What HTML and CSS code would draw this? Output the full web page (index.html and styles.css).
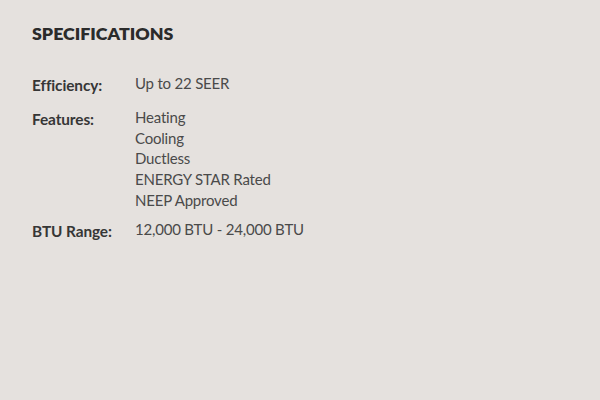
FILE: index.html
```html
<!DOCTYPE html>
<html>
<head>
<meta charset="utf-8">
<link rel="stylesheet" href="styles.css">
</head>
<body>
<div class="specs">
  <h2 class="title">SPECIFICATIONS</h2>
  <dl class="list">
    <div class="row">
      <dt class="label">Efficiency:</dt>
      <dd class="value">Up to 22 SEER</dd>
    </div>
    <div class="row">
      <dt class="label">Features:</dt>
      <dd class="value">Heating<br>Cooling<br>Ductless<br>ENERGY STAR Rated<br>NEEP Approved</dd>
    </div>
    <div class="row">
      <dt class="label">BTU Range:</dt>
      <dd class="value">12,000 BTU - 24,000 BTU</dd>
    </div>
  </dl>
</div>
</body>
</html>
```
FILE: styles.css
```css
html, body {
  margin: 0;
  padding: 0;
  background: #e5e1de;
  width: 600px;
  height: 400px;
}
.specs {
  padding: 22px 32px;
  font-family: "Lato", "Noto Sans", sans-serif;
  color: #444;
}
.title {
  margin: 0 0 29px;
  font-size: 17.8px;
  font-weight: 800;
  color: #2b2b2b;
  line-height: 22px;
}
.list {
  margin: 0;
  display: flex;
  flex-direction: column;
  gap: 8.5px;
}
.row {
  display: grid;
  grid-template-columns: 103px 1fr;
  align-items: start;
}
.label {
  font-weight: 700;
  font-size: 15.4px;
  letter-spacing: -0.1px;
  line-height: 21.5px;
  padding: 2px 0;
  color: #363636;
}
.value {
  margin: 0;
  font-size: 15px;
  letter-spacing: -0.2px;
  line-height: 20.7px;
  color: #4a4a4a;
}
```
